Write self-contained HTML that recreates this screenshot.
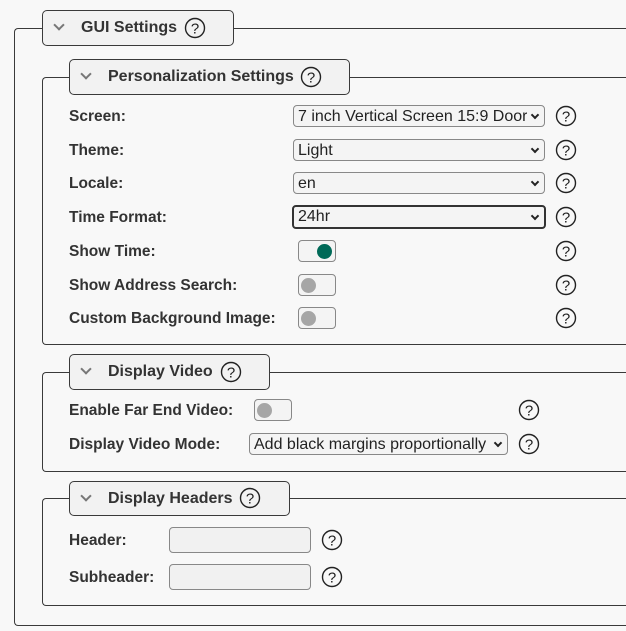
<!DOCTYPE html>
<html><head><style>
body{margin:0;width:626px;height:631px;background:#f8f8f8;font-family:"Liberation Sans",Arial,sans-serif;color:#333;position:relative;overflow:hidden}
.fs{position:absolute;border:1.5px solid #3a3a3a;border-radius:4px;border-right:none}
.lg{position:absolute;background:#f2f2f2;border:1.5px solid #3a3a3a;border-radius:5px;box-sizing:border-box;font-weight:bold;font-size:16px;color:#333}
.lg .t{position:absolute;top:8px}
.chev{position:absolute;top:10px;width:6px;height:6px;border-right:2px solid #777;border-bottom:2px solid #777;transform:rotate(45deg)}
.lbl{position:absolute;font-weight:bold;font-size:15.5px;color:#333;transform:translateY(-45%)}
.sel{position:absolute;height:22px;box-sizing:border-box;border:1px solid #888;border-radius:4px;background:#f4f4f4;font-size:16px;color:#222;padding:0 0 0 4px;line-height:21px;white-space:nowrap;overflow:hidden}
.sel:after{content:"";position:absolute;right:6px;top:6px;width:4px;height:4px;border-right:2px solid #222;border-bottom:2px solid #222;transform:rotate(45deg)}
.sel span{display:inline-block;max-width:calc(100% - 16px);overflow:hidden}
.tg{position:absolute;width:38px;height:22px;box-sizing:border-box;border:1px solid #888;border-radius:4px;background:#f4f4f4}
.tg i{position:absolute;top:3px;width:15px;height:15px;border-radius:50%;background:#a6a6a6;left:2px}
.tg.on i{background:#006a58;left:18px}
.inp{position:absolute;width:142px;height:26px;box-sizing:border-box;border:1px solid #888;border-radius:4px;background:#f1f1f1}
.h{position:absolute;width:22px;height:22px;transform:translate(-50%,-50%)}
.h text{font-weight:normal}
</style></head><body>
<svg width="0" height="0" style="position:absolute"><defs><g id="q"><circle cx="11" cy="11" r="9.5" fill="none" stroke="#222" stroke-width="1.4"/><text x="11" y="16.5" text-anchor="middle" font-family="Liberation Sans" font-weight="normal" font-size="15" fill="#222">?</text></g></defs></svg>

<div class="fs" style="left:14px;top:28px;width:620px;height:596px"></div>
<div class="lg" style="left:42px;top:10px;width:192px;height:36px"><div class="chev" style="left:12px"></div><div class="t" style="left:38px">GUI Settings</div><svg class="h" style="left:152px;top:17px"><use href="#q"/></svg></div>

<div class="fs" style="left:42px;top:77px;width:592px;height:266px"></div>
<div class="lg" style="left:69px;top:59px;width:281px;height:36px"><div class="chev" style="left:12px"></div><div class="t" style="left:38px">Personalization Settings</div><svg class="h" style="left:241px;top:17px"><use href="#q"/></svg></div>

<div class="lbl" style="left:69px;top:116px">Screen:</div>
<div class="sel" style="left:293px;top:105px;width:252px"><span>7 inch Vertical Screen 15:9 Door</span></div>
<svg class="h" style="left:566px;top:116px"><use href="#q"/></svg>
<div class="lbl" style="left:69px;top:150px">Theme:</div>
<div class="sel" style="left:293px;top:139px;width:252px"><span>Light</span></div>
<svg class="h" style="left:566px;top:150px"><use href="#q"/></svg>
<div class="lbl" style="left:69px;top:183px">Locale:</div>
<div class="sel" style="left:293px;top:172px;width:252px"><span>en</span></div>
<svg class="h" style="left:566px;top:183px"><use href="#q"/></svg>
<div class="lbl" style="left:69px;top:217px">Time Format:</div>
<div class="sel" style="left:292px;top:205px;width:254px;height:24px;border:2px solid #333;line-height:20px"><span>24hr</span></div>
<svg class="h" style="left:566px;top:217px"><use href="#q"/></svg>
<div class="lbl" style="left:69px;top:251px">Show Time:</div>
<div class="tg on" style="left:298px;top:240px"><i></i></div>
<svg class="h" style="left:566px;top:251px"><use href="#q"/></svg>
<div class="lbl" style="left:69px;top:285px">Show Address Search:</div>
<div class="tg" style="left:298px;top:274px"><i></i></div>
<svg class="h" style="left:566px;top:285px"><use href="#q"/></svg>
<div class="lbl" style="left:69px;top:318px">Custom Background Image:</div>
<div class="tg" style="left:298px;top:307px"><i></i></div>
<svg class="h" style="left:566px;top:318px"><use href="#q"/></svg>

<div class="fs" style="left:42px;top:372px;width:592px;height:98px"></div>
<div class="lg" style="left:69px;top:354px;width:201px;height:36px"><div class="chev" style="left:12px"></div><div class="t" style="left:38px">Display Video</div><svg class="h" style="left:161px;top:17px"><use href="#q"/></svg></div>
<div class="lbl" style="left:69px;top:410px">Enable Far End Video:</div>
<div class="tg" style="left:254px;top:399px"><i></i></div>
<svg class="h" style="left:529px;top:410px"><use href="#q"/></svg>
<div class="lbl" style="left:69px;top:444px">Display Video Mode:</div>
<div class="sel" style="left:249px;top:433px;width:259px"><span>Add black margins proportionally</span></div>
<svg class="h" style="left:529px;top:444px"><use href="#q"/></svg>

<div class="fs" style="left:42px;top:498px;width:592px;height:106px"></div>
<div class="lg" style="left:69px;top:481px;width:221px;height:35px"><div class="chev" style="left:12px"></div><div class="t" style="left:38px">Display Headers</div><svg class="h" style="left:180px;top:16px"><use href="#q"/></svg></div>
<div class="lbl" style="left:69px;top:540px">Header:</div>
<div class="inp" style="left:169px;top:527px"></div>
<svg class="h" style="left:332px;top:540px"><use href="#q"/></svg>
<div class="lbl" style="left:69px;top:577px">Subheader:</div>
<div class="inp" style="left:169px;top:564px"></div>
<svg class="h" style="left:332px;top:577px"><use href="#q"/></svg>
</body></html>
